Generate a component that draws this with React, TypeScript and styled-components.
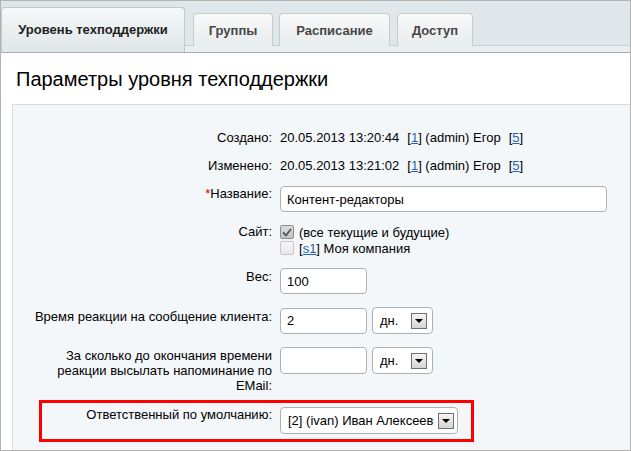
import React from "react";
import styled, { createGlobalStyle } from "styled-components";

const Global = createGlobalStyle`
  html, body { margin: 0; padding: 0; background: #fff; }
  body {
    font-family: "Liberation Sans", Arial, sans-serif;
    font-size: 13px;
    color: #000;
  }
  * { box-sizing: border-box; }
`;

const Frame = styled.div`
  width: 631px;
  height: 451px;
  border: 1px solid #b4b4b4;
  display: flex;
  flex-direction: column;
  overflow: hidden;
  background: #fff;
`;

const TabBar = styled.div`
  flex: none;
  display: flex;
  align-items: flex-end;
  gap: 7px;
  height: 52px;
  padding-top: 6px;
  background: linear-gradient(
    to bottom,
    #e0e7ea 0,
    #e0e7ea 44px,
    #c8d0d3 44px,
    #c8d0d3 45px,
    #e9eef0 45px,
    #e9eef0 51px
  );
  border-bottom: 1px solid #a7aeb1;
`;

const Tab = styled.div<{ $active?: boolean; $w: number }>`
  width: ${(p) => p.$w}px;
  height: ${(p) => (p.$active ? 45 : 33)}px;
  margin-bottom: ${(p) => (p.$active ? 0 : 6)}px;
  padding-top: ${(p) => (p.$active ? 14 : 9)}px;
  border: 1px solid ${(p) => (p.$active ? "#bfc8cc" : "#c4ccd0")};
  border-bottom: none;
  border-radius: 4px 4px 0 0;
  background: ${(p) =>
    p.$active
      ? "linear-gradient(to bottom, #f6f8f8 0%, #dfe6e8 100%)"
      : "linear-gradient(to bottom, #f8f9f9 0%, #e7eced 100%)"};
  color: ${(p) => (p.$active ? "#1f1f1f" : "#464646")};
  font-weight: bold;
  font-size: 13px;
  line-height: 15px;
  text-align: center;
  white-space: nowrap;
`;

const Panel = styled.div`
  flex: 1;
  display: flex;
  flex-direction: column;
  background: #fff;
`;

const Title = styled.h1`
  flex: none;
  margin: 0;
  height: 51px;
  padding: 15px 0 0 15px;
  font-family: "Liberation Sans", Arial, sans-serif;
  font-weight: normal;
  font-size: 20px;
  line-height: 22px;
  color: #000;
`;

const Box = styled.div`
  flex: 1;
  margin-left: 11px;
  border-top: 1px solid #d5dde1;
  border-left: 1px solid #d5dde1;
  background: #f4f7f9;
  padding-top: 25px;
  display: flex;
  flex-direction: column;
`;

const Row = styled.div<{ $mt?: number }>`
  display: grid;
  grid-template-columns: 259px 1fr;
  column-gap: 8px;
  margin-top: ${(p) => p.$mt ?? 0}px;
  align-items: start;
`;

const Label = styled.div<{ $pt?: number; $lh?: number }>`
  text-align: right;
  padding-top: ${(p) => p.$pt ?? 0}px;
  line-height: ${(p) => p.$lh ?? 16}px;
  color: #000;
`;

const Req = styled.span`
  color: #e00000;
`;

const Meta = styled.div`
  display: flex;
  gap: 8px;
  line-height: 16px;
  white-space: nowrap;
`;

const Link = styled.a`
  color: #2466b4;
  text-decoration: underline;
`;

const Input = styled.input<{ $w: number; $h?: number }>`
  width: ${(p) => p.$w}px;
  height: ${(p) => p.$h ?? 26}px;
  margin: 0;
  padding: 0 6px;
  border: 1px solid #a9b2b7;
  border-radius: 4px;
  background: #fff;
  font-family: "Liberation Sans", Arial, sans-serif;
  font-size: 13px;
  color: #000;
  outline: none;
`;

const Inline = styled.div`
  display: flex;
  gap: 5px;
  align-items: center;
`;

const Select = styled.div<{ $w: number }>`
  width: ${(p) => p.$w}px;
  height: 27px;
  display: flex;
  align-items: center;
  justify-content: space-between;
  gap: 4px;
  padding: 0 5px 0 7px;
  border: 1px solid #a9b2b7;
  border-radius: 4px;
  background: #fff;
  white-space: nowrap;
`;

const Arrow = styled.span`
  flex: none;
  width: 16px;
  height: 16px;
  border: 1px solid #6f6f6f;
  background: linear-gradient(to bottom, #f5f5f5, #d4d4d4);
  display: flex;
  align-items: center;
  justify-content: center;
  &::after {
    content: "";
    width: 0;
    height: 0;
    border-left: 4px solid transparent;
    border-right: 4px solid transparent;
    border-top: 4px solid #000;
  }
`;

const Checks = styled.div`
  display: flex;
  flex-direction: column;
`;

const CheckLine = styled.div`
  display: flex;
  align-items: center;
  gap: 5px;
  height: 16px;
  white-space: nowrap;
`;

const Box14 = styled.span<{ $checked?: boolean }>`
  flex: none;
  width: 14px;
  height: 14px;
  border-radius: 2px;
  border: 1px solid ${(p) => (p.$checked ? "#8e8e8e" : "#c6c6c6")};
  background: ${(p) =>
    p.$checked
      ? "linear-gradient(to bottom, #dcdcdc, #c4c4c4)"
      : "linear-gradient(to bottom, #f6f6f6, #e8e8e8)"};
  display: flex;
  align-items: center;
  justify-content: center;
`;

const Highlight = styled.div`
  margin-top: 7px;
  margin-left: 26px;
  width: 435px;
  border: 3px solid #ff0000;
  padding: 4px 0 5px;
  display: grid;
  grid-template-columns: 230px 1fr;
  column-gap: 8px;
  align-items: start;
`;

const Check = () => (
  <svg width="10" height="9" viewBox="0 0 10 9">
    <path d="M1 4.5 L4 7.5 L9 1" fill="none" stroke="#555" strokeWidth="1.8" />
  </svg>
);

export default function App() {
  return (
    <>
      <Global />
      <Frame>
        <TabBar>
          <Tab $active $w={184}>Уровень техподдержки</Tab>
          <Tab $w={80} style={{ marginLeft: 1 }}>Группы</Tab>
          <Tab $w={111} style={{ marginLeft: -1 }}>Расписание</Tab>
          <Tab $w={76}>Доступ</Tab>
        </TabBar>
        <Panel>
          <Title>Параметры уровня техподдержки</Title>
          <Box>
            <Row>
              <Label>Создано:</Label>
              <Meta>
                <span>20.05.2013 13:20:44</span>
                <span>
                  [<Link>1</Link>] (admin) Егор
                </span>
                <span>
                  [<Link>5</Link>]
                </span>
              </Meta>
            </Row>
            <Row $mt={12}>
              <Label>Изменено:</Label>
              <Meta>
                <span>20.05.2013 13:21:02</span>
                <span>
                  [<Link>1</Link>] (admin) Егор
                </span>
                <span>
                  [<Link>5</Link>]
                </span>
              </Meta>
            </Row>
            <Row $mt={12}>
              <Label $lh={15}>
                <Req>*</Req>Название:
              </Label>
              <Input $w={327} readOnly value="Контент-редакторы" />
            </Row>
            <Row $mt={12}>
              <Label>Сайт:</Label>
              <Checks>
                <CheckLine>
                  <Box14 $checked>
                    <Check />
                  </Box14>
                  <span>(все текущие и будущие)</span>
                </CheckLine>
                <CheckLine>
                  <Box14 />
                  <span>
                    [<Link>s1</Link>] Моя компания
                  </span>
                </CheckLine>
              </Checks>
            </Row>
            <Row $mt={12}>
              <Label $lh={15} $pt={1}>Вес:</Label>
              <Input $w={87} readOnly value="100" />
            </Row>
            <Row $mt={13}>
              <Label $lh={15} $pt={2}>Время реакции на сообщение клиента:</Label>
              <Inline>
                <Input $w={87} readOnly value="2" />
                <Select $w={61}>
                  <span>дн.</span>
                  <Arrow />
                </Select>
              </Inline>
            </Row>
            <Row $mt={13}>
              <Label $lh={15} $pt={1}>
                За сколько до окончания времени
                <br />
                реакции высылать напоминание по
                <br />
                EMail:
              </Label>
              <Inline>
                <Input $w={87} $h={27} readOnly value="" />
                <Select $w={61}>
                  <span>дн.</span>
                  <Arrow />
                </Select>
              </Inline>
            </Row>
            <Highlight>
              <Label $lh={15}>Ответственный по умолчанию:</Label>
              <Select $w={178}>
                <span>[2] (ivan) Иван Алексеев</span>
                <Arrow />
              </Select>
            </Highlight>
          </Box>
        </Panel>
      </Frame>
    </>
  );
}
